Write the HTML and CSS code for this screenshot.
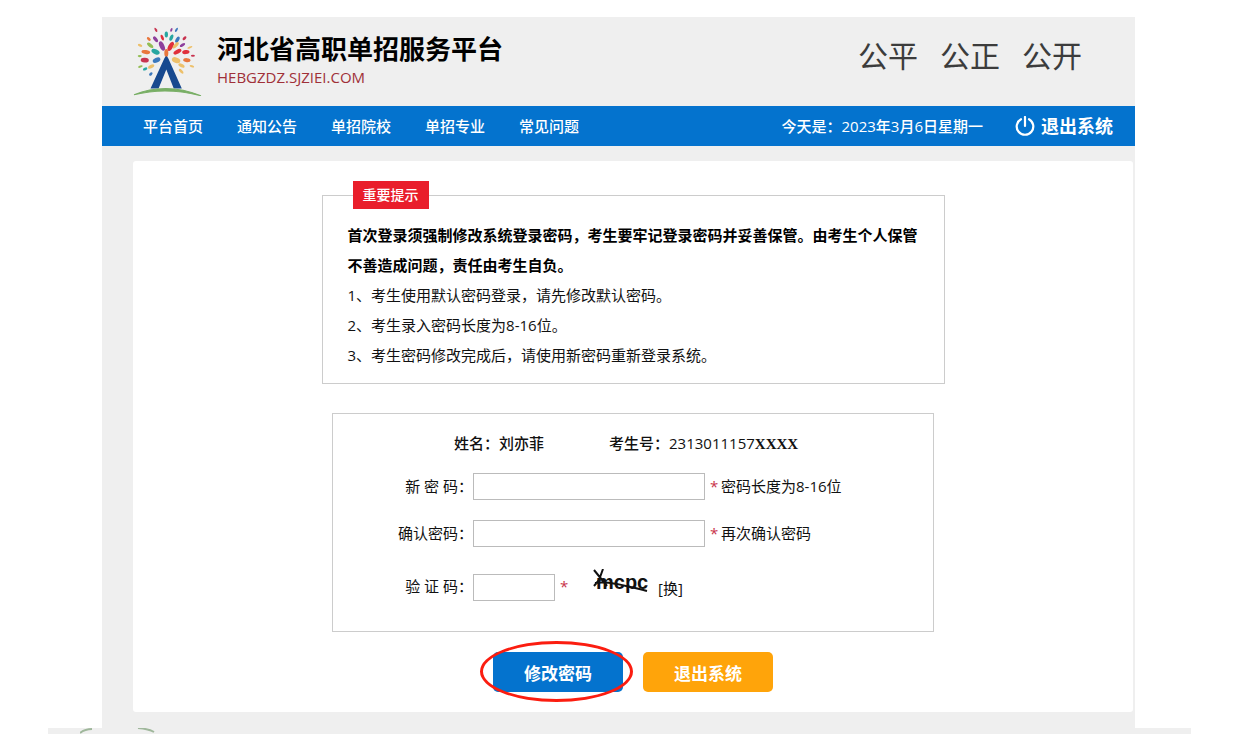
FILE: index.html
```html
<!DOCTYPE html>
<html lang="zh-CN">
<head>
<meta charset="utf-8">
<title>河北省高职单招服务平台</title>
<link rel="stylesheet" href="styles.css">
</head>
<body>
<div class="page">
  <header class="header">
    <svg class="logo" viewBox="25 20 205 210" aria-hidden="true">
      <g fill="#e0303c">
        <ellipse cx="137" cy="83" rx="15" ry="7" transform="rotate(-62 137 83)"/>
        <ellipse cx="157" cy="99" rx="13" ry="6" transform="rotate(-28 157 99)"/>
        <ellipse cx="112" cy="57" rx="9" ry="4" transform="rotate(66 112 57)"/>
        <ellipse cx="182" cy="100" rx="11" ry="6" transform="rotate(-8 182 100)"/>
      </g>
      <g fill="#c8334f">
        <ellipse cx="60" cy="124" rx="12" ry="7" transform="rotate(4 60 124)"/>
        <ellipse cx="93" cy="34" rx="7" ry="3" transform="rotate(60 93 34)"/>
        <ellipse cx="178" cy="59" rx="7" ry="4" transform="rotate(-45 178 59)"/>
        <ellipse cx="203" cy="111" rx="6" ry="3"/>
      </g>
      <g fill="#8d3f9c">
        <ellipse cx="111" cy="82" rx="15" ry="7" transform="rotate(65 111 82)"/>
        <ellipse cx="92" cy="62" rx="10" ry="5" transform="rotate(52 92 62)"/>
        <ellipse cx="172" cy="79" rx="9" ry="4" transform="rotate(-30 172 79)"/>
        <ellipse cx="139" cy="34" rx="6" ry="3" transform="rotate(-70 139 34)"/>
      </g>
      <g fill="#3b78bd">
        <ellipse cx="95" cy="124" rx="12" ry="7" transform="rotate(-26 95 124)"/>
        <ellipse cx="157" cy="63" rx="10" ry="5" transform="rotate(-60 157 63)"/>
        <ellipse cx="154" cy="34" rx="7" ry="3" transform="rotate(-58 154 34)"/>
        <ellipse cx="78" cy="165" rx="6" ry="4" transform="rotate(-45 78 165)"/>
      </g>
      <g fill="#27a6a1">
        <ellipse cx="124" cy="48" rx="9" ry="5" transform="rotate(90 124 48)"/>
        <ellipse cx="139" cy="57" rx="10" ry="5" transform="rotate(-68 139 57)"/>
        <ellipse cx="92" cy="99" rx="13" ry="7" transform="rotate(25 92 99)"/>
        <ellipse cx="61" cy="150" rx="7" ry="4" transform="rotate(-25 61 150)"/>
      </g>
      <g fill="#e9773d">
        <ellipse cx="63" cy="100" rx="13" ry="6" transform="rotate(10 63 100)"/>
        <ellipse cx="124" cy="103" rx="12" ry="6" transform="rotate(90 124 103)"/>
        <ellipse cx="185" cy="124" rx="11" ry="6" transform="rotate(5 185 124)"/>
        <ellipse cx="72" cy="61" rx="7" ry="4" transform="rotate(45 72 61)"/>
      </g>
      <g fill="#edc06a">
        <ellipse cx="153" cy="124" rx="13" ry="8" transform="rotate(20 153 124)"/>
        <ellipse cx="152" cy="80" rx="12" ry="5" transform="rotate(-46 152 80)"/>
        <ellipse cx="169" cy="140" rx="10" ry="5" transform="rotate(28 169 140)"/>
        <ellipse cx="168" cy="157" rx="9" ry="4" transform="rotate(45 168 157)"/>
        <ellipse cx="79" cy="143" rx="10" ry="5" transform="rotate(-28 79 143)"/>
        <ellipse cx="46" cy="80" rx="7" ry="4" transform="rotate(25 46 80)"/>
        <ellipse cx="194" cy="86" rx="8" ry="3" transform="rotate(-22 194 86)"/>
        <ellipse cx="200" cy="142" rx="7" ry="3" transform="rotate(20 200 142)"/>
      </g>
      <g fill="#93bd54">
        <ellipse cx="76" cy="80" rx="11" ry="5" transform="rotate(38 76 80)"/>
        <ellipse cx="47" cy="143" rx="7" ry="3" transform="rotate(-20 47 143)"/>
        <ellipse cx="45" cy="112" rx="6" ry="3"/>
      </g>
      <path d="M77 208 L118 119 Q124 106 130 119 L170 208 H146 L124 152 L101 208 Z" fill="#17498f"/>
      <path d="M28 227 Q124 188 227 230 Q124 203 28 227 Z" fill="#79af66" stroke="#79af66" stroke-width="3"/>
    </svg>
    <div class="brand">
      <h1 class="brand-name">河北省高职单招服务平台</h1>
      <p class="brand-domain">HEBGZDZ.SJZIEI.COM</p>
    </div>
    <p class="motto"><span>公平</span><span>公正</span><span>公开</span></p>
  </header>

  <nav class="nav">
    <div class="nav-links">
      <a href="#">平台首页</a>
      <a href="#">通知公告</a>
      <a href="#">单招院校</a>
      <a href="#">单招专业</a>
      <a href="#">常见问题</a>
    </div>
    <span class="today">今天是：2023年3月6日星期一</span>
    <a class="logout" href="#">
      <svg class="power" viewBox="0 0 20 20" aria-hidden="true">
        <path d="M6 3.2 A8.3 8.3 0 1 0 14 3.2 M10 1 V10" fill="none" stroke="#fff" stroke-width="2.2" stroke-linecap="round"/>
      </svg>
      退出系统
    </a>
  </nav>

  <main class="panel">
    <fieldset class="notice">
      <legend class="notice-tag">重要提示</legend>
      <p class="notice-strong">首次登录须强制修改系统登录密码，考生要牢记登录密码并妥善保管。由考生个人保管不善造成问题，责任由考生自负。</p>
      <p>1、考生使用默认密码登录，请先修改默认密码。</p>
      <p>2、考生录入密码长度为8-16位。</p>
      <p>3、考生密码修改完成后，请使用新密码重新登录系统。</p>
    </fieldset>

    <form class="form" id="password-form">
      <div class="identity">
        <span>姓名：刘亦菲</span>
        <span>考生号：2313011157<span class="mask">XXXX</span></span>
      </div>
      <div class="row">
        <label for="new-password">新 密 码：</label>
        <input class="field" id="new-password" type="password">
        <span class="star">*</span>
        <span>密码长度为8-16位</span>
      </div>
      <div class="row row-confirm">
        <label for="confirm-password">确认密码：</label>
        <input class="field" id="confirm-password" type="password">
        <span class="star">*</span>
        <span>再次确认密码</span>
      </div>
      <div class="row row-code">
        <label for="code">验 证 码：</label>
        <input class="field field-short" id="code" type="text">
        <span class="star">*</span>
        <svg class="captcha" viewBox="0 0 60 28" role="img" aria-label="验证码">
          <text x="3" y="20">mcpc</text>
          <path d="M1 1 L14 17 M10 0 L6 11 L1 17 M2 14 C16 12 34 17 54 22" fill="none" stroke="#111" stroke-width="2"/>
        </svg>
        <a class="refresh" href="#">[换]</a>
      </div>
    </form>

    <div class="actions">
      <div class="marked">
        <button class="button button-primary" type="submit" form="password-form">修改密码</button>
        <span class="ring"></span>
      </div>
      <button class="button button-exit" type="button">退出系统</button>
    </div>
  </main>
</div>
<footer class="footer">
  <svg class="arc" viewBox="0 0 76 6" aria-hidden="true">
    <path d="M0 5 Q5 1 12 1 M58 0 Q69 1 74 4" fill="none" stroke="#9fb79b" stroke-width="2"/>
  </svg>
</footer>
</body>
</html>
```
FILE: styles.css
```css
* {
  box-sizing: border-box;
}

body {
  margin: 0;
  background: #fff;
  color: #111;
  font-family: "Open Sans", "Noto Sans CJK SC", sans-serif;
  font-size: 15px;
  line-height: 30px;
}

h1,
p {
  margin: 0;
}

a {
  color: inherit;
  text-decoration: none;
}

.page {
  margin: 17px 107px 0 102px;
  padding-bottom: 16px;
  background: #efefef;
}

.header {
  display: flex;
  align-items: flex-start;
  height: 89px;
  padding: 8px 53px 0 31px;
}

.logo {
  width: 69px;
  height: 71px;
}

.brand {
  margin-left: 15px;
  padding-top: 6px;
}

.brand-name {
  color: #000;
  font-size: 26px;
  font-weight: 700;
  line-height: 36px;
}

.brand-domain {
  color: #a03038;
  font-size: 15px;
  line-height: 20px;
}

.motto {
  display: flex;
  gap: 22px;
  margin-left: auto;
  padding-top: 11px;
  color: #3c3c3c;
  font-size: 30px;
  line-height: 40px;
}

.nav {
  display: flex;
  align-items: center;
  height: 40px;
  padding: 0 22px 0 41px;
  background: #0473ce;
  color: #fff;
  font-weight: 500;
}

.nav-links {
  display: flex;
  gap: 34px;
}

.today {
  margin-left: auto;
}

.logout {
  display: flex;
  align-items: center;
  gap: 6px;
  margin-left: 32px;
  font-size: 18px;
  font-weight: 700;
}

.power {
  width: 20px;
  height: 20px;
}

.panel {
  display: flex;
  flex-direction: column;
  align-items: center;
  margin: 15px 2px 0 31px;
  padding: 20px 20px;
  border-radius: 3px;
  background: #fff;
}

.notice {
  width: 100%;
  max-width: 623px;
  margin: 0;
  padding: 11px 20px 13px 25px;
  border: 1px solid #ccc;
}

.notice-tag {
  margin-left: 5px;
  padding: 0 10px;
  background: #e91e2b;
  color: #fff;
  font-size: 14px;
  font-weight: 500;
  line-height: 28px;
}

.notice-strong {
  color: #000;
  font-weight: 700;
}

.form {
  width: 100%;
  max-width: 602px;
  margin-top: 29px;
  padding: 14px 20px 30px 65px;
  border: 1px solid #ccc;
}

.identity {
  display: flex;
  gap: 65px;
  margin: 0 0 15px 56px;
  font-weight: 500;
}

.mask {
  font-family: "Liberation Serif", serif;
  font-weight: 700;
  line-height: 1;
}

.row {
  display: flex;
  align-items: flex-start;
  height: 27px;
  line-height: 26px;
}

.row label {
  width: 75px;
  text-align: right;
  white-space: pre;
}

.row-confirm {
  margin-top: 20px;
}

.row-code {
  align-items: center;
  margin-top: 27px;
}

.row-code label,
.row-code .star {
  padding-bottom: 4px;
}

.field {
  width: 232px;
  height: 27px;
  padding: 0 6px;
  border: 1px solid #bbb;
  background: #fff;
  font: inherit;
}

.field-short {
  width: 82px;
}

.star {
  width: 11px;
  margin-left: 5px;
  color: #c8334a;
}

.captcha {
  width: 60px;
  height: 28px;
  margin: 0 5px 10px 22px;
}

.captcha text {
  fill: #111;
  font-family: "Liberation Sans", sans-serif;
  font-size: 20px;
  font-weight: 700;
}

.actions {
  display: flex;
  gap: 20px;
  margin-top: 20px;
}

.marked {
  position: relative;
}

.button {
  display: block;
  width: 130px;
  height: 40px;
  padding: 0;
  border: 0;
  border-radius: 5px;
  color: #fff;
  font-family: inherit;
  font-size: 17px;
  font-weight: 700;
}

.button-primary {
  background: #0473ce;
}

.button-exit {
  background: #ffa40a;
}

.ring {
  position: absolute;
  inset: -11px -10px -10px -13px;
  border: 3px solid #fb1d10;
  border-radius: 50%;
  pointer-events: none;
}

.footer {
  height: 6px;
  margin: 0 51px 0 48px;
  padding-left: 32px;
  background: #efefef;
}

.arc {
  display: block;
  width: 76px;
  height: 6px;
}
```
